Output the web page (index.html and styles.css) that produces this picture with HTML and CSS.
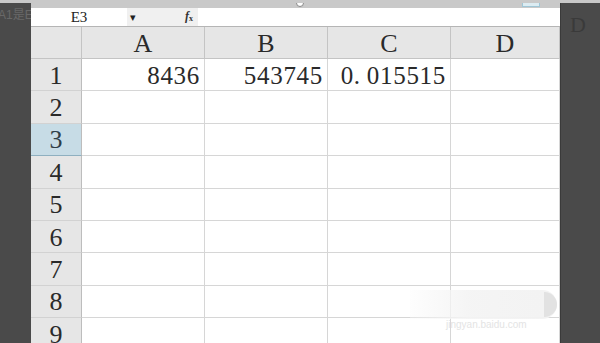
FILE: index.html
```html
<!DOCTYPE html>
<html>
<head>
<meta charset="utf-8">
<link rel="stylesheet" href="styles.css">
</head>
<body>
<div class="page">
  <div class="topband"></div>
  <div class="frame">
    <div class="side side-left"><span class="ghost-left">A1是E</span></div>
    <div class="main">
      <div class="graybar"><span class="dot"></span><span class="tab"></span></div>
      <div class="formula">
        <div class="namebox">E3</div>
        <div class="tools"><span class="arrow">▾</span><span class="fx"><i>f</i><sub>x</sub></span></div>
        <div class="input"></div>
      </div>
      <div class="sheet">
        <div class="hd corner"></div>
        <div class="hd col">A</div>
        <div class="hd col">B</div>
        <div class="hd col">C</div>
        <div class="hd col">D</div>

        <div class="hd row">1</div>
        <div class="cell num">8436</div>
        <div class="cell num">543745</div>
        <div class="cell num">0<span class="pt">.</span>015515</div>
        <div class="cell"></div>

        <div class="hd row">2</div><div class="cell"></div><div class="cell"></div><div class="cell"></div><div class="cell"></div>
        <div class="hd row sel">3</div><div class="cell"></div><div class="cell"></div><div class="cell"></div><div class="cell"></div>
        <div class="hd row">4</div><div class="cell"></div><div class="cell"></div><div class="cell"></div><div class="cell"></div>
        <div class="hd row">5</div><div class="cell"></div><div class="cell"></div><div class="cell"></div><div class="cell"></div>
        <div class="hd row">6</div><div class="cell"></div><div class="cell"></div><div class="cell"></div><div class="cell"></div>
        <div class="hd row">7</div><div class="cell"></div><div class="cell"></div><div class="cell"></div><div class="cell"></div>
        <div class="hd row">8</div><div class="cell"></div><div class="cell"></div><div class="cell"></div><div class="cell"></div>
        <div class="hd row">9</div><div class="cell"></div><div class="cell"></div><div class="cell"></div><div class="cell"></div>
      </div>
      <div class="watermark"><span class="wm-cap"></span><span class="wm-text">jingyan.baidu.com</span></div>
    </div>
    <div class="side side-right"><span class="ghost-right">D</span></div>
  </div>
</div>
</body>
</html>
```
FILE: styles.css
```css
html, body {
  margin: 0;
  padding: 0;
  width: 600px;
  height: 343px;
  overflow: hidden;
  background: #4a4a4a;
}
.page {
  width: 600px;
  height: 343px;
  display: flex;
  flex-direction: column;
  font-family: "Liberation Serif", "DejaVu Serif", serif;
}
.topband {
  height: 3px;
  background: #c9c9c9;
  flex: none;
}
.frame {
  flex: 1;
  display: flex;
  min-height: 0;
}
.side {
  background: #4a4a4a;
  overflow: hidden;
  flex: none;
}
.side-left {
  width: 31px;
}
.side-right {
  width: 40px;
  border-left: 1px solid #3a3a3a;
  box-sizing: border-box;
}
.ghost-left {
  display: block;
  margin-top: 2px;
  margin-left: -2px;
  white-space: nowrap;
  color: #686868;
  font-family: "Liberation Sans", "Noto Sans CJK SC", sans-serif;
  font-size: 12px;
}
.ghost-right {
  display: block;
  margin: 9px 0 0 9px;
  color: #3a3a3a;
  font-size: 22px;
}
.main {
  position: relative;
  width: 529px;
  flex: none;
  display: flex;
  flex-direction: column;
  overflow: hidden;
  background: #fff;
}
.graybar {
  position: relative;
  height: 5px;
  background: #c9c9c9;
  flex: none;
}
.dot {
  position: absolute;
  left: 265px;
  top: -4px;
  width: 6px;
  height: 6px;
  border: 1px solid #888;
  border-radius: 50%;
  background: #fff;
}
.tab {
  position: absolute;
  left: 491px;
  top: -3px;
  width: 18px;
  height: 7px;
  border: 1px solid #9fc6d6;
  border-top: none;
  background: #dcecf2;
  box-sizing: border-box;
}
.formula {
  height: 18px;
  display: flex;
  flex: none;
  border-bottom: 1px solid #b5b5b5;
  background: #fff;
}
.namebox {
  width: 96px;
  text-align: center;
  font-family: "Liberation Serif", serif;
  font-size: 15px;
  line-height: 19px;
  color: #222;
}
.tools {
  width: 71px;
  background: #f0f0f0;
  position: relative;
  font-family: "Liberation Sans", sans-serif;
}
.arrow {
  position: absolute;
  left: 3px;
  top: 0;
  font-size: 11px;
  line-height: 18px;
  color: #222;
}
.fx {
  position: absolute;
  left: 58px;
  top: 1px;
  font-size: 12px;
  line-height: 14px;
  color: #333;
  font-family: "Liberation Serif", serif;
  font-weight: bold;
}
.fx sub {
  font-size: 8px;
  vertical-align: -1px;
}
.input {
  flex: 1;
}
.sheet {
  display: grid;
  grid-template-columns: 51px 123px 123px 123px 109px;
  grid-template-rows: 32px repeat(9, 32.4px);
  flex: none;
}
.hd {
  background: #e6e6e6;
  border-right: 1px solid #c4c4c4;
  border-bottom: 1px solid #c4c4c4;
  color: #2a2a2a;
  display: flex;
  align-items: center;
  justify-content: center;
  font-size: 26px;
  box-sizing: border-box;
}
.hd.col {
  padding-top: 3px;
}
.hd.row {
  border-right: 1px solid #bdbdbd;
  border-bottom: 1px solid #d2d2d2;
  padding-top: 2px;
}
.hd.sel {
  background: #c7dce6;
  border-bottom: 1px solid #8fb0c0;
  color: #2f3e48;
}
.cell {
  border-right: 1px solid #d6d6d6;
  border-bottom: 1px solid #d6d6d6;
  box-sizing: border-box;
  font-size: 25px;
  letter-spacing: 0.7px;
  color: #2a2a2a;
  display: flex;
  align-items: center;
  padding: 2px 4px 0 4px;
}
.cell.num {
  justify-content: flex-end;
}
.pt {
  padding-right: 6px;
}
.watermark {
  position: absolute;
  left: 379px;
  top: 287px;
  width: 147px;
  height: 29px;
  border-radius: 0 15px 15px 0;
  background: linear-gradient(90deg, rgba(250,250,250,0.3), rgba(244,244,244,0.95) 40%, rgba(242,242,242,0.95));
  overflow: visible;
}
.wm-cap {
  position: absolute;
  right: 0;
  top: 2px;
  width: 13px;
  height: 25px;
  border-radius: 0 13px 13px 0;
  background: #e2e2e2;
}
.wm-text {
  position: absolute;
  left: 36px;
  top: 29px;
  font-family: "Liberation Sans", sans-serif;
  font-size: 10px;
  color: #e4e4e4;
  white-space: nowrap;
}
```
